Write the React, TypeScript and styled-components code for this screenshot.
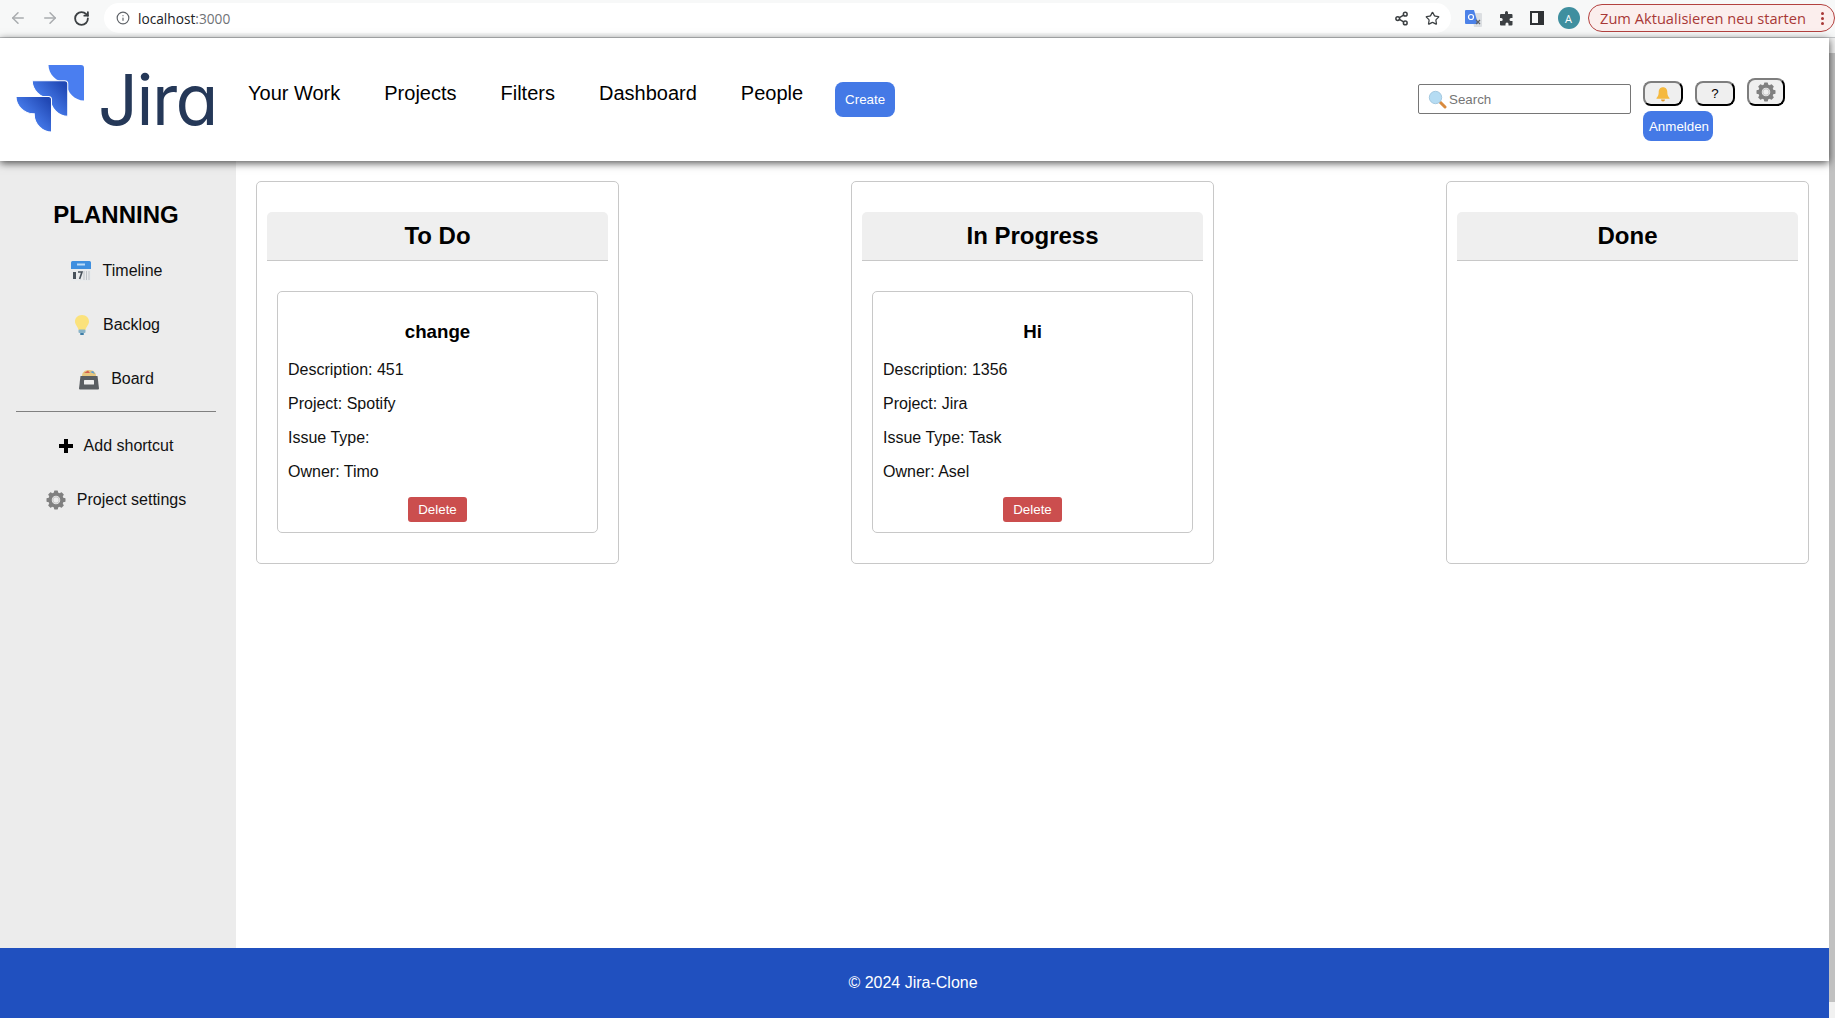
import React from "react";
import styled, { createGlobalStyle } from "styled-components";
import { ArrowLeft, ArrowRight, RotateCw, Info, Share2, Star } from "lucide-react";

const GlobalStyle = createGlobalStyle`
  html, body {
    margin: 0;
    height: 100%;
    overflow: hidden;
    font-family: "Liberation Sans", Arial, sans-serif;
    background: #fff;
  }
  * { box-sizing: border-box; }
`;

const columns = [
  {
    title: "To Do",
    tasks: [{ name: "change", description: "451", project: "Spotify", type: "", owner: "Timo" }],
  },
  {
    title: "In Progress",
    tasks: [{ name: "Hi", description: "1356", project: "Jira", type: "Task", owner: "Asel" }],
  },
  { title: "Done", tasks: [] },
];

function CalendarIcon() {
  return (
    <svg width="22" height="22" viewBox="0 0 22 22">
      <rect x="1" y="1" width="20" height="20" rx="1.5" fill="#e9ebec" />
      <path d="M1 2.5A1.5 1.5 0 0 1 2.5 1h17A1.5 1.5 0 0 1 21 2.5V9H1z" fill="#3f8fdf" />
      <rect x="7" y="3.5" width="8" height="2" fill="#bcdcf8" />
      <rect x="3" y="12" width="3" height="7" fill="#47515a" />
      <path d="M8 12h4l-2.4 7" fill="none" stroke="#47515a" strokeWidth="1.6" />
      <path d="M14 11v9M16.500 11v9M19 11v9" stroke="#bfc4c8" strokeWidth="1" />
    </svg>
  );
}

function BulbIcon() {
  return (
    <svg width="20" height="22" viewBox="0 0 18 22">
      <path d="M9 1C4.500 1 2 4 2 7.500c0 3.500 3 5 3.500 8.500h7c.5-3.500 3.500-5 3.500-8.500C16 4 13.500 1 9 1z" fill="#fbe27c" />
      <rect x="5.500" y="15.500" width="7" height="3.500" rx="1" fill="#8ab4c8" />
      <rect x="7" y="19" width="4" height="2" rx="1" fill="#3e7ea8" />
    </svg>
  );
}

function FileBoxIcon() {
  return (
    <svg width="22" height="22" viewBox="0 0 22 22">
      <path d="M4 8c0-3 2-6 7-6s7 3 7 6z" fill="#e8c77e" />
      <path d="M6 5l4-2.500 2 2.500z" fill="#d45f4f" />
      <path d="M12 4l3-1 2 3z" fill="#5b9ed8" />
      <path d="M2.500 8h17L21 20.500a1 1 0 0 1-1 1H2a1 1 0 0 1-1-1z" fill="#5a5e62" />
      <rect x="6" y="12" width="10" height="4.500" rx=".5" fill="#eeeeee" />
    </svg>
  );
}

function GearIcon({ size = 20 }: { size?: number }) {
  const teeth = [0, 45, 90, 135, 180, 225, 270, 315];
  return (
    <svg width={size} height={size} viewBox="0 0 20 20">
      {teeth.map((deg) => (
        <rect key={deg} x="8" y="0.5" width="4" height="4" rx="0.8" fill="#808080" transform={`rotate(${deg} 10 10)`} />
      ))}
      <circle cx="10" cy="10" r="6" fill="none" stroke="#808080" strokeWidth="3.5" />
      <circle cx="10" cy="10" r="3.2" fill="none" stroke="#c4c4c4" strokeWidth="1" />
    </svg>
  );
}

function BellIcon() {
  return (
    <svg width="16" height="16" viewBox="0 0 16 16">
      <path d="M8 1.200c-3 0-4.300 2.300-4.300 5 0 3-1 4.300-2.200 5.800v.8h13V12c-1.200-1.500-2.200-2.800-2.200-5.800 0-2.700-1.300-5-4.300-5z" fill="#f5b93f" />
      <path d="M6 13.500h4a2 2 0 0 1-4 0z" fill="#e09a2a" />
    </svg>
  );
}

function MagnifierIcon() {
  return (
    <svg width="19" height="19" viewBox="0 0 19 19">
      <path d="M11 11l6 6" stroke="#d98a3d" strokeWidth="3" strokeLinecap="round" />
      <circle cx="7.500" cy="7.500" r="6.200" fill="#b5dcf3" stroke="#a5c9e0" strokeWidth="1" />
    </svg>
  );
}

function JiraMark() {
  const shard = "M0 0H32Q35 0 35 3V35C26 35 18 27 18 18V17H17C8 17 0 9 0 0Z";
  return (
    <svg width="68" height="68" viewBox="0 0 67 67">
      <defs>
        <linearGradient id="shardFill" x1="1" y1="0.1" x2="0.35" y2="0.7">
          <stop offset="0.1" stopColor="#2148b4" />
          <stop offset="1" stopColor="#4a80f0" />
        </linearGradient>
      </defs>
      <path d={shard} transform="translate(32 0)" fill="#4a7ef0" />
      <path d={shard} transform="translate(16 15.500)" fill="url(#shardFill)" stroke="#fff" strokeWidth="1" />
      <path d={shard} transform="translate(0 31)" fill="url(#shardFill)" stroke="#fff" strokeWidth="1" />
    </svg>
  );
}

function TranslateIcon() {
  return (
    <svg width="17" height="17" viewBox="0 0 17 17">
      <path d="M7 3h9a1 1 0 0 1 1 1v12a1 1 0 0 1-1 1H9z" fill="#dcdfe2" />
      <path d="M1 0h8l4 14H1a1 1 0 0 1-1-1V1a1 1 0 0 1 1-1z" fill="#4c82e8" />
      <circle cx="6" cy="7" r="2.500" fill="none" stroke="#fff" strokeWidth="1.200" />
      <path d="M11 10l4 4M15 10l-4 4" stroke="#5f6368" strokeWidth="1.200" />
    </svg>
  );
}

function PuzzleIcon() {
  return (
    <svg width="15" height="15" viewBox="0 0 15 15">
      <path
        d="M6 1.500a1.500 1.500 0 0 1 3 0V3h3.500a1 1 0 0 1 1 1v3H12a1.500 1.500 0 0 0 0 3h1.500v3.500a1 1 0 0 1-1 1H9.500V13a1.500 1.500 0 0 0-3 0v1.500H2a1 1 0 0 1-1-1V10h1.200a1.500 1.500 0 0 0 0-3H1V4a1 1 0 0 1 1-1h4z"
        fill="#3c4043"
      />
    </svg>
  );
}

function App() {
  return (
    <>
      <GlobalStyle />
      <BrowserBar>
        <NavIcons>
          <ArrowLeft size={18} color="#a9acaf" strokeWidth={2} />
          <ArrowRight size={18} color="#a9acaf" strokeWidth={2} />
          <RotateCw size={17} color="#3c4043" strokeWidth={2.600} />
        </NavIcons>
        <AddressPill>
          <AddressLeft>
            <Info size={14} color="#5f6368" />
            <Address>
              localhost<Port>:3000</Port>
            </Address>
          </AddressLeft>
          <AddressRight>
            <Share2 size={15} color="#3c4043" strokeWidth={2.400} />
            <Star size={15} color="#3c4043" />
          </AddressRight>
        </AddressPill>
        <ExtensionIcons>
          <TranslateIcon />
          <PuzzleIcon />
          <PanelGlyph />
          <Avatar>A</Avatar>
        </ExtensionIcons>
        <UpdatePill>
          <span>Zum Aktualisieren neu starten</span>
          <Dots>
            <i />
            <i />
            <i />
          </Dots>
        </UpdatePill>
      </BrowserBar>
      <Viewport>
        <Page>
          <Header>
            <Logo>
              <JiraMark />
              <LogoText>Jira</LogoText>
            </Logo>
            <Nav>
              <NavLink>Your Work</NavLink>
              <NavLink>Projects</NavLink>
              <NavLink>Filters</NavLink>
              <NavLink>Dashboard</NavLink>
              <NavLink>People</NavLink>
            </Nav>
            <CreateButton>Create</CreateButton>
            <HeaderRight>
              <SearchBox>
                <MagnifierIcon />
                <span>Search</span>
              </SearchBox>
              <Actions>
                <ActionRow>
                  <IconButton>
                    <BellIcon />
                  </IconButton>
                  <IconButton>?</IconButton>
                  <GearButton>
                    <GearIcon size={20} />
                  </GearButton>
                </ActionRow>
                <LoginButton>Anmelden</LoginButton>
              </Actions>
            </HeaderRight>
          </Header>
          <Body>
            <Sidebar>
              <SideTitle>PLANNING</SideTitle>
              <SideItem>
                <CalendarIcon />
                Timeline
              </SideItem>
              <SideItem>
                <BulbIcon />
                Backlog
              </SideItem>
              <SideItem>
                <FileBoxIcon />
                Board
              </SideItem>
              <Divider />
              <SideItem>
                <PlusGlyph />
                Add shortcut
              </SideItem>
              <SideItem>
                <GearIcon />
                Project settings
              </SideItem>
            </Sidebar>
            <Board>
              {columns.map((col) => (
                <Column key={col.title}>
                  <ColumnTitle>{col.title}</ColumnTitle>
                  {col.tasks.map((t) => (
                    <Card key={t.name}>
                      <CardTitle>{t.name}</CardTitle>
                      <CardLine>Description: {t.description}</CardLine>
                      <CardLine>Project: {t.project}</CardLine>
                      <CardLine>Issue Type: {t.type}</CardLine>
                      <CardLine>Owner: {t.owner}</CardLine>
                      <DeleteButton>Delete</DeleteButton>
                    </Card>
                  ))}
                </Column>
              ))}
            </Board>
          </Body>
          <Footer>© 2024 Jira-Clone</Footer>
        </Page>
        <Scrollbar>
          <ScrollThumb />
        </Scrollbar>
      </Viewport>
    </>
  );
}

const BrowserBar = styled.div`
  height: 38px;
  padding-bottom: 1px;
  background: #f7f8f8;
  border-bottom: 1px solid #c4c6c8;
  display: flex;
  align-items: center;
`;

const NavIcons = styled.div`
  width: 104px;
  padding-left: 9px;
  display: flex;
  align-items: center;
  gap: 14px;
`;

const AddressPill = styled.div`
  width: 1347px;
  height: 30px;
  border-radius: 15px;
  background: #fff;
  display: flex;
  align-items: center;
  justify-content: space-between;
  padding: 0 11px 0 12px;
`;

const AddressLeft = styled.div`
  display: flex;
  align-items: center;
  gap: 8px;
`;

const Address = styled.span`
  font: 13.7px "Open Sans", sans-serif;
  color: #202124;
`;

const Port = styled.span`
  color: #6f7276;
`;

const AddressRight = styled.div`
  display: flex;
  align-items: center;
  gap: 16px;
`;

const ExtensionIcons = styled.div`
  width: 137px;
  padding-left: 14px;
  display: flex;
  align-items: center;
  gap: 16.500px;
`;

const PanelGlyph = styled.span`
  width: 14px;
  height: 14px;
  border: 2px solid #2f3235;
  border-right-width: 6px;
`;

const Avatar = styled.span`
  width: 22px;
  height: 22px;
  border-radius: 50%;
  margin-left: -3px;
  background: #3f8f9f;
  color: #fff;
  font: 11px "Open Sans", sans-serif;
  display: flex;
  align-items: center;
  justify-content: center;
`;

const UpdatePill = styled.div`
  width: 247px;
  height: 28px;
  border: 1px solid #b3413f;
  border-radius: 14px;
  background: #fbeeed;
  color: #a83836;
  font: 14.650px "Open Sans", sans-serif;
  display: flex;
  align-items: center;
  justify-content: space-between;
  padding: 0 10px 0 11px;
  white-space: nowrap;
`;

const Dots = styled.span`
  display: flex;
  flex-direction: column;
  gap: 2px;
  i {
    width: 3px;
    height: 3px;
    border-radius: 50%;
    background: #a83836;
  }
`;

const Viewport = styled.div`
  height: 980px;
  display: flex;
`;

const Page = styled.div`
  flex: 1;
  min-width: 0;
  display: flex;
  flex-direction: column;
`;

const Scrollbar = styled.div`
  width: 6px;
  background: #f1f1f1;
  padding: 15px 0 16px;
`;

const ScrollThumb = styled.div`
  height: 100%;
  background: #c1c1c1;
`;

const Header = styled.header`
  height: 123px;
  flex-shrink: 0;
  padding-left: 16px;
  background: #fff;
  display: flex;
  align-items: flex-start;
  position: relative;
  z-index: 1;
  box-shadow: 0 2px 8px rgba(0, 0, 0, 0.7);
`;

const Logo = styled.div`
  width: 232px;
  height: 123px;
  padding-top: 27px;
  display: flex;
  align-items: flex-start;
  gap: 14px;
`;

const LogoText = styled.span`
  font: 400 70px/1 Inter, sans-serif;
  font-feature-settings: "cv11";
  letter-spacing: -1.500px;
  color: #253858;
`;

const Nav = styled.nav`
  display: flex;
  gap: 44px;
  padding-top: 44px;
`;

const NavLink = styled.a`
  font-size: 20px;
  line-height: 23px;
  color: #000;
  white-space: nowrap;
`;

const CreateButton = styled.button`
  margin: 44px 0 0 32px;
  width: 60px;
  height: 35px;
  border: 0;
  border-radius: 8px;
  padding: 0;
  background: #4479e6;
  color: #fff;
  font: 13.33px "Liberation Sans", sans-serif;
`;

const HeaderRight = styled.div`
  margin-left: auto;
  display: flex;
  align-items: flex-start;
  padding: 40px 44px 0 0;
`;

const SearchBox = styled.div`
  width: 213px;
  height: 30px;
  margin: 6px 12px 0 0;
  border: 1px solid #767676;
  border-radius: 2px;
  padding-left: 9px;
  display: flex;
  align-items: center;
  gap: 2px;
  color: #757575;
  font-size: 13.33px;
`;

const Actions = styled.div`
  width: 142px;
  display: flex;
  flex-direction: column;
  align-items: flex-start;
  gap: 5px;
`;

const ActionRow = styled.div`
  display: flex;
  align-items: flex-end;
  gap: 12px;
`;

const IconButton = styled.button`
  width: 40px;
  height: 25px;
  border: 2px outset #2a2a2a;
  border-radius: 8px;
  padding: 0;
  background: #efefef;
  color: #000;
  font: 13.33px "Liberation Sans", sans-serif;
  display: flex;
  align-items: center;
  justify-content: center;
`;

const GearButton = styled(IconButton)`
  width: 38px;
  height: 28px;
`;

const LoginButton = styled.button`
  width: 70px;
  height: 30px;
  border: 0;
  border-radius: 8px;
  padding: 0 0 0 2px;
  background: #4479e6;
  color: #fff;
  font: 13.33px "Liberation Sans", sans-serif;
`;

const Body = styled.div`
  flex: 1;
  min-height: 0;
  display: flex;
`;

const Sidebar = styled.aside`
  width: 236px;
  flex-shrink: 0;
  background: #ececec;
  padding: 40px 20px 0 16px;
  display: flex;
  flex-direction: column;
  align-items: stretch;
`;

const SideTitle = styled.h2`
  margin: 0 0 15px;
  font-size: 24px;
  line-height: 28px;
  font-weight: 700;
  text-align: center;
  color: #000;
`;

const SideItem = styled.div`
  height: 54px;
  display: flex;
  align-items: center;
  justify-content: center;
  gap: 11px;
  font-size: 16px;
  color: #111;
  white-space: nowrap;
`;

const Divider = styled.hr`
  width: 100%;
  margin: 5px 0 7px;
  border: 0;
  border-top: 1px solid #808080;
`;

const PlusGlyph = styled.span`
  width: 14px;
  height: 14px;
  background:
    linear-gradient(#000, #000) center / 14px 4px no-repeat,
    linear-gradient(#000, #000) center / 4px 14px no-repeat;
`;

const Board = styled.main`
  flex: 1;
  padding: 20px;
  display: flex;
  justify-content: space-between;
  align-items: flex-start;
`;

const Column = styled.section`
  width: 363px;
  height: 383px;
  border: 1px solid #c8c8c8;
  border-radius: 5px;
  padding: 30px 10px 0;
`;

const ColumnTitle = styled.h2`
  margin: 0 0 30px;
  height: 49px;
  background: #efefef;
  border-bottom: 1px solid #c8c8c8;
  border-radius: 5px 5px 0 0;
  font-size: 24px;
  line-height: 48px;
  font-weight: 700;
  text-align: center;
  color: #000;
`;

const Card = styled.article`
  margin: 0 10px;
  height: 242px;
  border: 1px solid #c8c8c8;
  border-radius: 5px;
  padding: 29px 10px 0;
  display: flex;
  flex-direction: column;
`;

const CardTitle = styled.h3`
  margin: 0 0 19px;
  font-size: 18.72px;
  line-height: 21px;
  font-weight: 700;
  text-align: center;
  color: #000;
`;

const CardLine = styled.p`
  margin: 0 0 16px;
  font-size: 16px;
  line-height: 18px;
  color: #111;
`;

const DeleteButton = styled.button`
  align-self: center;
  margin-top: 0;
  width: 59px;
  height: 25px;
  border: 0;
  border-radius: 3px;
  padding: 0;
  background: #cb4e4e;
  color: #fff;
  font: 13.33px "Liberation Sans", sans-serif;
`;

const Footer = styled.footer`
  height: 70px;
  flex-shrink: 0;
  padding-right: 3px;
  background: #2050bf;
  color: #fff;
  font-size: 16px;
  display: flex;
  align-items: center;
  justify-content: center;
`;

export default App;
